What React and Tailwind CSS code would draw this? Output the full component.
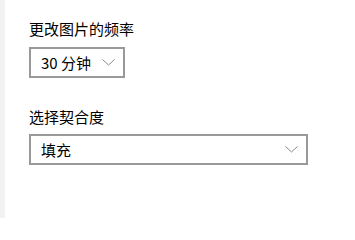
import React from "react";

function Chevron() {
  return (
    <svg width="13" height="7" viewBox="0 0 13 7" className="shrink-0">
      <path d="M0.5 0.5 L6.5 6 L12.5 0.5" fill="none" stroke="#8a8a8a" strokeWidth="1" />
    </svg>
  );
}

function Dropdown({ value, width }) {
  return (
    <div
      className={`flex h-[31px] items-center justify-between border-2 border-[#999999] bg-white pl-[10px] pr-[8px] ${width}`}
    >
      <span className="text-[15px] leading-5 text-black">{value}</span>
      <Chevron />
    </div>
  );
}

export default function App() {
  return (
    <div
      className="flex h-[218px] w-[355px] bg-white"
      style={{ fontFamily: '"Noto Sans CJK SC", "Noto Sans", sans-serif' }}
    >
      <div className="w-[5px] shrink-0 bg-[#f2f2f2]" />
      <div className="flex flex-col pl-6 pt-[19px]">
        <div className="mb-2 text-[15px] leading-5 text-black">更改图片的频率</div>
        <Dropdown value="30 分钟" width="w-[96px]" />
        <div className="mt-[29px] mb-[7px] text-[15px] leading-5 text-black">选择契合度</div>
        <Dropdown value="填充" width="w-[279px]" />
      </div>
    </div>
  );
}
